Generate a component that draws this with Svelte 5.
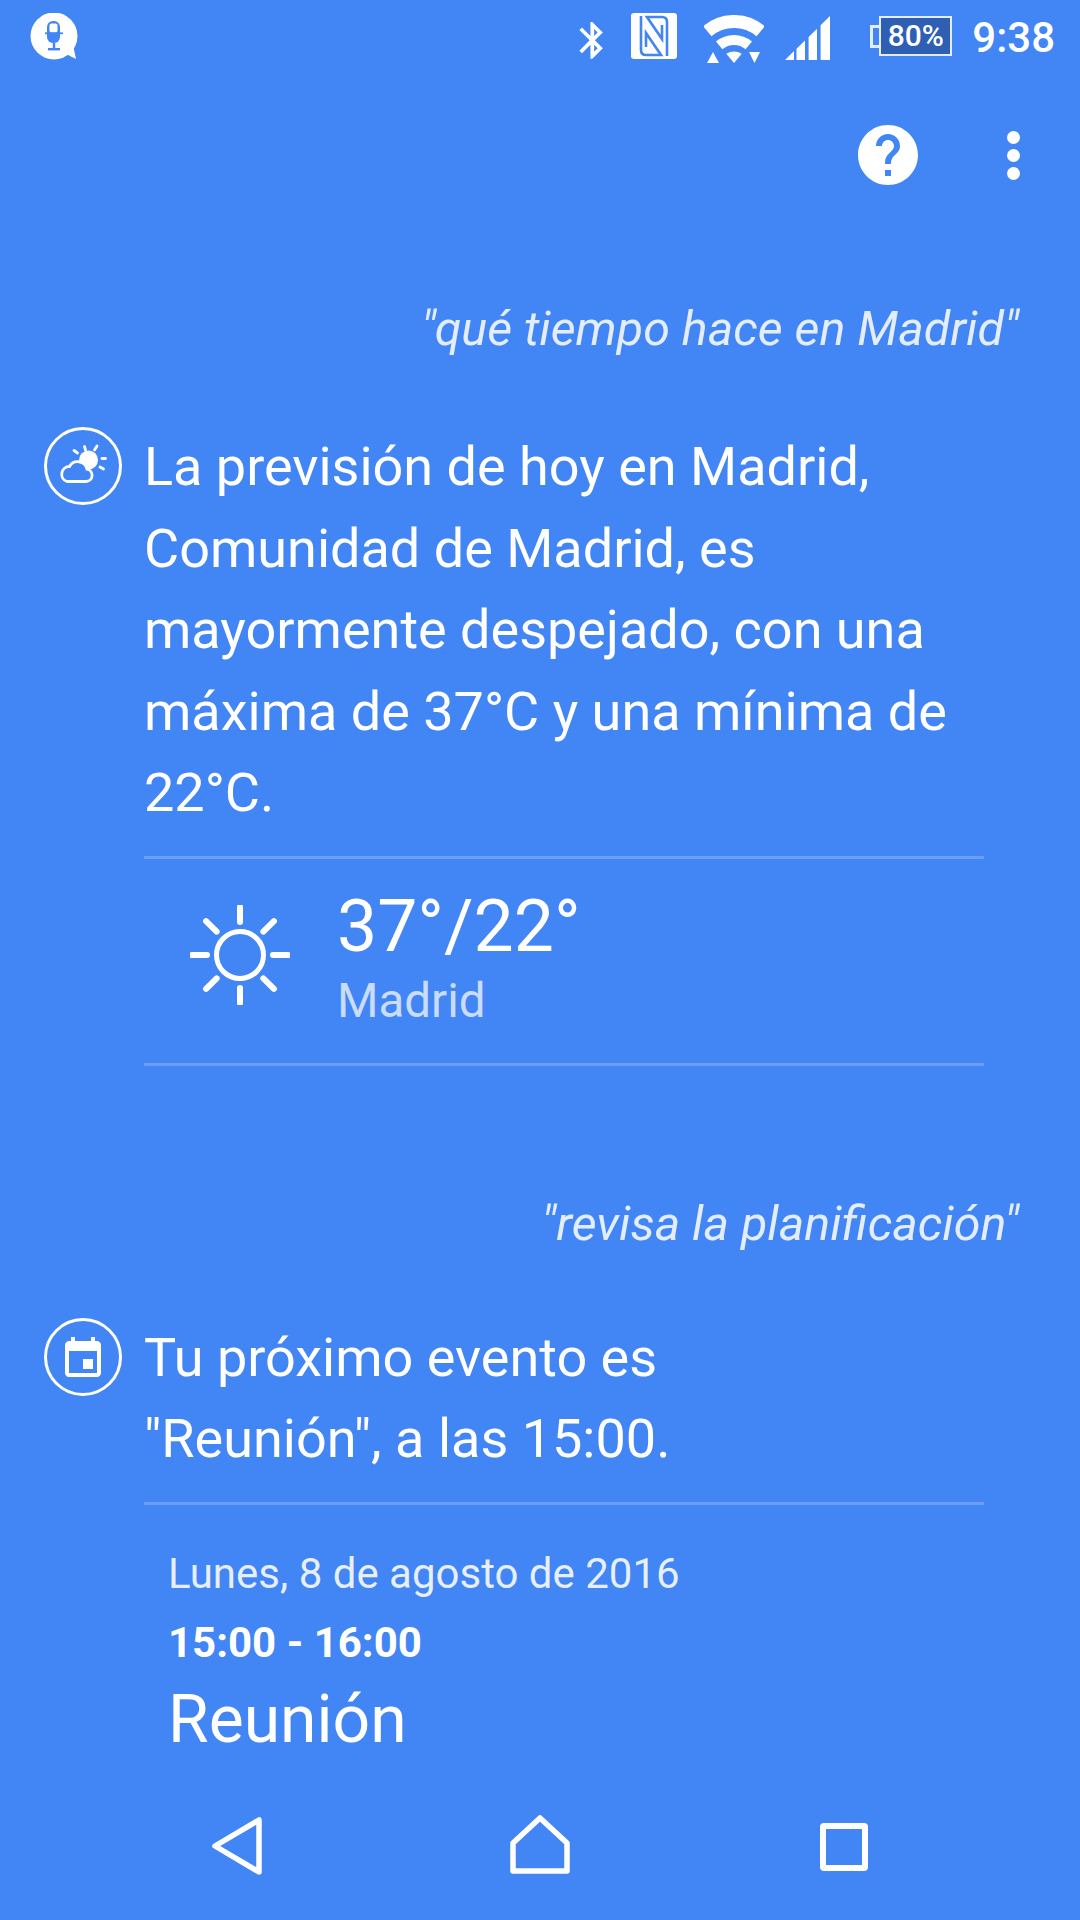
<script>
    // voice assistant results screen
    const forecastLines = [
        "La previsión de hoy en Madrid,",
        "Comunidad de Madrid, es",
        "mayormente despejado, con una",
        "máxima de 37°C y una mínima de",
        "22°C."
    ];
    const eventLines = ["Tu próximo evento es", '"Reunión", a las 15:00.'];
    const rays = [0, 45, 90, 135, 180, 225, 270, 315];
</script>

<div class="screen">
    <div class="status">
        <svg class="mic" width="48" height="48" viewBox="30 13 48 48">
            <circle cx="54" cy="36" r="23.5" fill="#fff" />
            <path d="M64 53 L73 45 L76 59 Z" fill="#fff" />
            <rect x="47" y="21" width="13" height="22" rx="6" fill="#4285f4" />
            <rect x="49.5" y="23.5" width="8" height="9" rx="2" fill="#fff" />
            <rect x="45" y="32.4" width="18" height="1.8" fill="#4285f4" />
            <rect x="52.8" y="43" width="2.4" height="6" fill="#4285f4" />
            <rect x="48" y="48" width="12" height="2.4" fill="#4285f4" />
        </svg>

        <svg class="bt" width="28" height="38" viewBox="4.5 1.5 13.6 20.6">
            <path fill="#fff" d="M17.71 7.71L12 2h-1v7.59L6.41 5 5 6.41 10.59 12 5 17.59 6.41 19 11 14.41V22h1l5.71-5.71-4.3-4.29 4.3-4.29zM13 5.83l1.88 1.88L13 9.59V5.83zm1.88 10.46L13 18.17v-3.76l1.88 1.88z" />
        </svg>
        <svg class="nfc" width="46" height="46" viewBox="0 0 46 46">
            <rect width="46" height="46" rx="3" fill="#fff" />
            <path d="M10 3 V37 Q10 42 15 42 H30 L15 20 V34" fill="none" stroke="#4285f4" stroke-width="2.6" />
            <path d="M36 43 V9 Q36 4 31 4 H16 L31 26 V12" fill="none" stroke="#4285f4" stroke-width="2.6" />
        </svg>
        <svg class="wifi" width="60" height="48" viewBox="0 0 60 48">
            <path d="M3.3 16.2 A41.5 41.5 0 0 1 56.7 16.2" fill="none" stroke="#fff" stroke-width="13" />
            <path d="M15.2 30.4 A23 23 0 0 1 44.8 30.4" fill="none" stroke="#fff" stroke-width="10" />
            <path d="M22.3 38.8 Q30 34 37.7 38.8 L30 48 Z" fill="#fff" />
            <path d="M3 48 L9 37 L15 48 Z" fill="#fff" />
            <path d="M45 37 H56 L50.5 48 Z" fill="#fff" />
        </svg>
        <svg class="signal" width="45" height="44" viewBox="0 0 45 44">
            <path fill="#fff" d="M0 44 H9 V35 Z M11.5 44 H20 V24.4 L11.5 32.8 Z M23.6 44 H32 V12.7 L23.6 20.9 Z M35.6 44 H45 V0 L35.6 9.2 Z" />
        </svg>
        <div class="battery">
            <span class="nub"></span>
            <span class="cell">80%</span>
        </div>
        <span class="clock">9:38</span>
    </div>

    <div class="actions">
        <svg class="help" width="72" height="72" viewBox="0 0 24 24">
            <path fill="#fff" d="M12 2C6.48 2 2 6.48 2 12s4.48 10 10 10 10-4.48 10-10S17.52 2 12 2zm1 17h-2v-2h2v2zm2.07-7.75l-.9.92C13.45 12.9 13 13.5 13 15h-2v-.5c0-1.1.45-2.1 1.17-2.83l1.24-1.26c.37-.36.59-.86.59-1.41 0-1.1-.9-2-2-2s-2 .9-2 2H8c0-2.21 1.79-4 4-4s4 1.79 4 4c0 .88-.36 1.68-.93 2.25z" />
        </svg>
        <div class="dots"><i></i><i></i><i></i></div>
    </div>

    <div class="feed">
        <p class="query first">"qué tiempo hace en Madrid"</p>

        <div class="reply">
            <svg class="badge" width="80" height="80" viewBox="0 0 80 80">
                <circle cx="40" cy="40" r="37.5" fill="none" stroke="#fff" stroke-width="3" />
                <circle cx="45.5" cy="34" r="9.5" fill="#fff" />
                <g stroke="#fff" stroke-width="2.8" stroke-linecap="round">
                    <path d="M41.5 20.5 L42.5 24" />
                    <path d="M54 20 L51.5 24" />
                    <path d="M59 32.5 H62.5" />
                    <path d="M57 41 L60.5 43" />
                    <path d="M31 24.5 L34.5 27" />
                </g>
                <path d="M24 55.5 H43 A6.2 6.2 0 0 0 44 43.2 A9.5 9.5 0 0 0 26.5 40.5 A7.7 7.7 0 0 0 24 55.5 Z" fill="#4285f4" stroke="#fff" stroke-width="2.8" />
            </svg>
            <div class="reply-body">
                <p class="speech">
                    {#each forecastLines as line}<span>{line}</span>{/each}
                </p>
                <div class="weather">
                    <svg class="sun" width="100" height="100" viewBox="0 0 100 100">
                        <circle cx="50" cy="50" r="23.5" fill="none" stroke="#fff" stroke-width="5" />
                        {#each rays as a}
                            <path d="M50 17 V2" stroke="#fff" stroke-width="6" stroke-linecap="round" transform="rotate({a} 50 50)" />
                        {/each}
                    </svg>
                    <div>
                        <div class="temp">37°/22°</div>
                        <div class="place">Madrid</div>
                    </div>
                </div>
            </div>
        </div>

        <p class="query second">"revisa la planificación"</p>

        <div class="reply">
            <svg class="badge" width="80" height="80" viewBox="0 0 80 80">
                <circle cx="40" cy="40" r="37.5" fill="none" stroke="#fff" stroke-width="3" />
                <svg x="16" y="18" width="48" height="48" viewBox="0 0 24 24">
                    <path fill="#fff" d="M17 12h-5v5h5v-5zM16 1v2H8V1H6v2H5c-1.11 0-1.99.9-1.99 2L3 19c0 1.1.89 2 2 2h14c1.1 0 2-.9 2-2V5c0-1.1-.9-2-2-2h-1V1h-2zm3 18H5V8h14v11z" />
                </svg>
            </svg>
            <div class="reply-body">
                <p class="speech">
                    {#each eventLines as line}<span>{line}</span>{/each}
                </p>
                <div class="event">
                    <div class="date">Lunes, 8 de agosto de 2016</div>
                    <div class="hours">15:00 - 16:00</div>
                    <div class="title">Reunión</div>
                </div>
            </div>
        </div>
    </div>

    <div class="nav">
        <svg class="back" width="60" height="64" viewBox="0 0 60 64">
            <path d="M8 32 L52 6 V58 Z" transform="translate(-1 0)" fill="none" stroke="#fff" stroke-width="5.5" stroke-linejoin="round" />
        </svg>
        <svg class="home" width="60" height="60" viewBox="0 0 60 60">
            <path d="M3 56 V28 L30 3 L57 28 V56 Z" fill="none" stroke="#fff" stroke-width="5.5" stroke-linejoin="round" />
        </svg>
        <div class="recents"></div>
    </div>
</div>

<style>
    :global(body) {
        margin: 0;
    }

    .screen {
        width: 1080px;
        height: 1920px;
        overflow: hidden;
        display: flex;
        flex-direction: column;
        background: #4285f4;
        color: #fff;
        font-family: Roboto, "Liberation Sans", sans-serif;
    }

    p {
        margin: 0;
    }

    /* status bar */
    .status {
        height: 75px;
        flex: none;
        display: flex;
        align-items: flex-start;
        padding: 0 25px 0 30px;
        box-sizing: border-box;
    }

    .mic {
        margin-top: 13px;
        margin-right: auto;
    }

    .bt {
        margin-top: 21px;
    }

    .nfc {
        margin: 13px 0 0 26px;
    }

    .wifi {
        margin: 15px 0 0 27px;
    }

    .signal {
        margin: 16px 0 0 21px;
    }

    .battery {
        margin: 16px 0 0 40px;
        display: flex;
        align-items: center;
    }

    .nub {
        width: 6px;
        height: 17px;
        border: 3px solid #e3edfd;
        border-right: 0;
    }

    .cell {
        width: 69px;
        height: 36px;
        border: 2px solid #e3edfd;
        background: #2e5fb3;
        font-size: 30px;
        font-weight: 500;
        line-height: 36px;
        text-align: center;
    }

    .clock {
        margin: 11px 0 0 20px;
        font-size: 42px;
        font-weight: 500;
        line-height: 54px;
    }

    /* toolbar */
    .actions {
        height: 110px;
        flex: none;
        display: flex;
        align-items: flex-end;
        justify-content: flex-end;
        padding-right: 60px;
        box-sizing: border-box;
    }

    .help {
        margin: 0 83px -6px 0;
    }

    .dots {
        display: flex;
        flex-direction: column;
        gap: 5px;
        padding-bottom: 5px;
    }

    .dots i {
        width: 13px;
        height: 13px;
        border-radius: 50%;
        background: #fff;
    }

    /* conversation */
    .feed {
        flex: 1;
        min-height: 0;
        overflow: hidden;
    }

    .query {
        padding-right: 61px;
        font-size: 48.4px;
        font-style: italic;
        line-height: 60px;
        text-align: right;
        color: rgba(255, 255, 255, 0.85);
    }

    .query.first {
        margin: 114px 0 67px;
    }

    .query.second {
        margin: 128px 0 63px;
    }

    .reply {
        display: flex;
        gap: 21px;
        padding-left: 43px;
    }

    .badge {
        flex: none;
    }

    .reply-body {
        width: 840px;
    }

    .speech {
        padding-bottom: 22px;
        border-bottom: 3px solid #6a9ff7;
        font-size: 54px;
        line-height: 81.5px;
    }

    .speech span {
        display: block;
        white-space: nowrap;
    }

    .weather {
        height: 207px;
        display: flex;
        align-items: flex-start;
        gap: 47px;
        padding: 28px 0 0 46px;
        box-sizing: border-box;
        border-bottom: 3px solid #6a9ff7;
    }

    .sun {
        margin-top: 18px;
    }

    .temp {
        font-size: 71.5px;
        font-weight: 400;
        line-height: 80px;
    }

    .place {
        margin-top: 4px;
        font-size: 47.5px;
        line-height: 60px;
        color: rgba(255, 255, 255, 0.72);
    }

    .event {
        padding: 44px 0 0 24px;
    }

    .date {
        font-size: 42px;
        line-height: 50px;
        color: rgba(255, 255, 255, 0.88);
    }

    .hours {
        margin-top: 19px;
        font-size: 42px;
        font-weight: 700;
        line-height: 50px;
    }

    .title {
        margin-top: 17px;
        font-size: 66px;
        line-height: 70px;
    }

    /* navigation */
    .nav {
        height: 130px;
        flex: none;
        display: flex;
        align-items: center;
        justify-content: space-between;
        padding: 0 212px 20px 208px;
        box-sizing: border-box;
    }

    .back {
        margin-top: 2px;
    }

    .home {
        margin-right: 8px;
    }

    .recents {
        width: 36px;
        height: 36px;
        margin-top: 4px;
        border: 6px solid #fff;
        border-radius: 4px;
    }
</style>
